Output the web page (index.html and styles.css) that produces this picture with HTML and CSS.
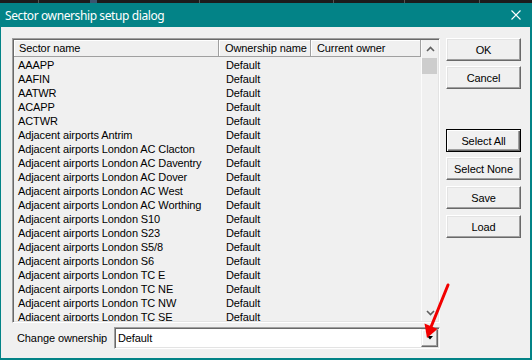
FILE: index.html
```html
<!DOCTYPE html>
<html>
<head>
<meta charset="utf-8">
<link rel="stylesheet" href="styles.css">
</head>
<body>
<div class="strip"></div>
<div class="titlebar">
  <span class="title">Sector ownership setup dialog</span>
  <svg class="close" width="10" height="10" viewBox="0 0 10 10"><path d="M0.5 0.5 L9.5 9.5 M9.5 0.5 L0.5 9.5" stroke="#fff" stroke-width="1.1" fill="none"/></svg>
</div>
<div class="client">
  <div class="main">
    <div class="list">
      <div class="listbody">
        <div class="header">
          <div class="hc c1">Sector name</div>
          <div class="hc c2">Ownership name</div>
          <div class="hc c3">Current owner</div>
        </div>
        <div class="rows">
          <div class="row"><span>AAAPP</span><span>Default</span></div>
          <div class="row"><span>AAFIN</span><span>Default</span></div>
          <div class="row"><span>AATWR</span><span>Default</span></div>
          <div class="row"><span>ACAPP</span><span>Default</span></div>
          <div class="row"><span>ACTWR</span><span>Default</span></div>
          <div class="row"><span>Adjacent airports Antrim</span><span>Default</span></div>
          <div class="row"><span>Adjacent airports London AC Clacton</span><span>Default</span></div>
          <div class="row"><span>Adjacent airports London AC Daventry</span><span>Default</span></div>
          <div class="row"><span>Adjacent airports London AC Dover</span><span>Default</span></div>
          <div class="row"><span>Adjacent airports London AC West</span><span>Default</span></div>
          <div class="row"><span>Adjacent airports London AC Worthing</span><span>Default</span></div>
          <div class="row"><span>Adjacent airports London S10</span><span>Default</span></div>
          <div class="row"><span>Adjacent airports London S23</span><span>Default</span></div>
          <div class="row"><span>Adjacent airports London S5/8</span><span>Default</span></div>
          <div class="row"><span>Adjacent airports London S6</span><span>Default</span></div>
          <div class="row"><span>Adjacent airports London TC E</span><span>Default</span></div>
          <div class="row"><span>Adjacent airports London TC NE</span><span>Default</span></div>
          <div class="row"><span>Adjacent airports London TC NW</span><span>Default</span></div>
          <div class="row"><span>Adjacent airports London TC SE</span><span>Default</span></div>
        </div>
      </div>
      <div class="vscroll">
        <div class="sbtn"><svg width="9" height="6" viewBox="0 0 9 6"><polyline points="1,5 4.5,1.5 8,5" stroke="#606060" stroke-width="1.6" fill="none"/></svg></div>
        <div class="thumb"></div>
        <div class="track"></div>
        <div class="sbtn"><svg width="9" height="6" viewBox="0 0 9 6"><polyline points="1,1 4.5,4.5 8,1" stroke="#606060" stroke-width="1.6" fill="none"/></svg></div>
      </div>
    </div>
    <div class="buttons">
      <div class="btn">OK</div>
      <div class="btn">Cancel</div>
      <div class="btn default sep">Select All</div>
      <div class="btn">Select None</div>
      <div class="btn g6">Save</div>
      <div class="btn g6">Load</div>
    </div>
  </div>
  <div class="bottom">
    <span class="label">Change ownership</span>
    <div class="combo">
      <span class="ctext">Default</span>
      <div class="dd"><svg width="6" height="4" viewBox="0 0 6 4"><polygon points="0,0 6,0 3,3.5" fill="#000"/></svg></div>
    </div>
  </div>
</div>
<svg class="annot" width="532" height="360" viewBox="0 0 532 360">
  <line x1="448" y1="285" x2="431" y2="327" stroke="#f20000" stroke-width="3" stroke-linecap="round"/>
  <polygon points="424.5,323.5 437.5,329 427,338" fill="#f20000"/>
</svg>
</body>
</html>
```

FILE: styles.css
```css
html, body {
  margin: 0;
  padding: 0;
  width: 532px;
  height: 360px;
  overflow: hidden;
}
body {
  position: relative;
  display: flex;
  flex-direction: column;
  background: #f0f0f0;
  font-family: "Liberation Sans", Arial, sans-serif;
  font-size: 11px;
  letter-spacing: -0.1px;
  color: #000;
}
.strip {
  height: 3px;
  flex-shrink: 0;
  background:
    linear-gradient(to right,
      transparent 38px, #555 38px, #555 39px, transparent 39px,
      transparent 90px, #3a5570 90px, #3a5570 97px, transparent 97px,
      transparent 199px, #555 199px, #555 200px, transparent 200px,
      transparent 333px, #555 333px, #555 334px, transparent 334px,
      transparent 404px, #555 404px, #555 405px, transparent 405px,
      transparent 479px, #555 479px, #555 480px, transparent 480px),
    #1c1c1c;
}
.titlebar {
  height: 24px;
  flex-shrink: 0;
  background: #038387;
  color: #fff;
  display: flex;
  align-items: center;
  justify-content: space-between;
  padding: 0 11px 0 5px;
  font-family: "Noto Sans", "Open Sans", sans-serif;
  font-size: 12px;
  letter-spacing: -0.4px;
}
.close {
  display: block;
}
.client {
  flex: 1;
  display: flex;
  flex-direction: column;
  gap: 4px;
  border-style: solid;
  border-color: #038387;
  border-width: 0 2px 2px 1px;
  padding: 11px 0 0 11px;
}
.main {
  display: flex;
  gap: 6px;
  height: 285px;
  flex-shrink: 0;
}
.list {
  width: 428px;
  height: 285px;
  box-sizing: border-box;
  border: 1px solid;
  border-color: #a0a0a0 #fff #fff #a0a0a0;
  box-shadow: inset 1px 1px #696969, inset -1px -1px #e3e3e3;
  padding: 1px;
  display: flex;
}
.listbody {
  flex: 1;
  display: flex;
  flex-direction: column;
  overflow: hidden;
}
.header {
  display: flex;
  height: 17px;
  flex-shrink: 0;
}
.hc {
  box-sizing: border-box;
  height: 17px;
  line-height: 16px;
  padding-left: 5px;
  white-space: nowrap;
  overflow: hidden;
  border-right: 1px solid #a0a0a0;
  border-bottom: 1px solid #a0a0a0;
  box-shadow: inset 1px 1px #fff;
}
.c1 { width: 205px; }
.c2 { width: 92px; padding-left: 6px; }
.c3 { width: 110px; padding-left: 6px; }
.rows {
  padding-top: 1px;
}
.row {
  display: grid;
  grid-template-columns: 208px 1fr;
  height: 14px;
  line-height: 14px;
  padding-left: 4px;
  white-space: nowrap;
}
.vscroll {
  width: 17px;
  box-sizing: border-box;
  border-left: 1px solid #fbfbfb;
  display: flex;
  flex-direction: column;
}
.sbtn {
  height: 17px;
  flex-shrink: 0;
  display: flex;
  align-items: center;
  justify-content: center;
}
.sbtn svg { display: block; }
.thumb {
  height: 16px;
  margin: 1px 1px 0 0;
  background: #cdcdcd;
  flex-shrink: 0;
}
.track { flex: 1; }
.buttons {
  width: 75px;
  display: flex;
  flex-direction: column;
}
.btn {
  height: 23px;
  box-sizing: border-box;
  display: flex;
  align-items: center;
  justify-content: center;
  background: #f0f0f0;
  border: 1px solid;
  border-color: #fff #696969 #696969 #fff;
  box-shadow: inset -1px -1px #a0a0a0, inset 1px 1px #e3e3e3;
}
.btn + .btn { margin-top: 5px; }
.btn.sep { margin-top: 40px; }
.btn.g6 { margin-top: 6px; }
.btn.default {
  border-color: #000;
  box-shadow: inset 1px 1px #fff, inset -1px -1px #696969, inset -2px -2px #a0a0a0;
}
.bottom {
  display: flex;
  align-items: center;
  height: 22px;
  flex-shrink: 0;
}
.label {
  width: 102px;
  box-sizing: border-box;
  padding-left: 5px;
  white-space: nowrap;
}
.combo {
  width: 326px;
  height: 22px;
  box-sizing: border-box;
  border: 1px solid;
  border-color: #a0a0a0 #fff #fff #a0a0a0;
  box-shadow: inset 1px 1px #696969, inset -1px -1px #e3e3e3;
  padding: 1px;
  background: #fff;
  display: flex;
  align-items: stretch;
}
.ctext {
  flex: 1;
  padding-left: 2px;
  display: flex;
  align-items: center;
}
.dd {
  width: 17px;
  box-sizing: border-box;
  background: #f0f0f0;
  border: 1px solid;
  border-color: #f0f0f0 #696969 #696969 #f0f0f0;
  box-shadow: inset -1px -1px #a0a0a0, inset 1px 1px #fff;
  display: flex;
  align-items: center;
  justify-content: center;
}
.dd svg { display: block; }
.annot {
  position: absolute;
  left: 0;
  top: 0;
  pointer-events: none;
}
```
